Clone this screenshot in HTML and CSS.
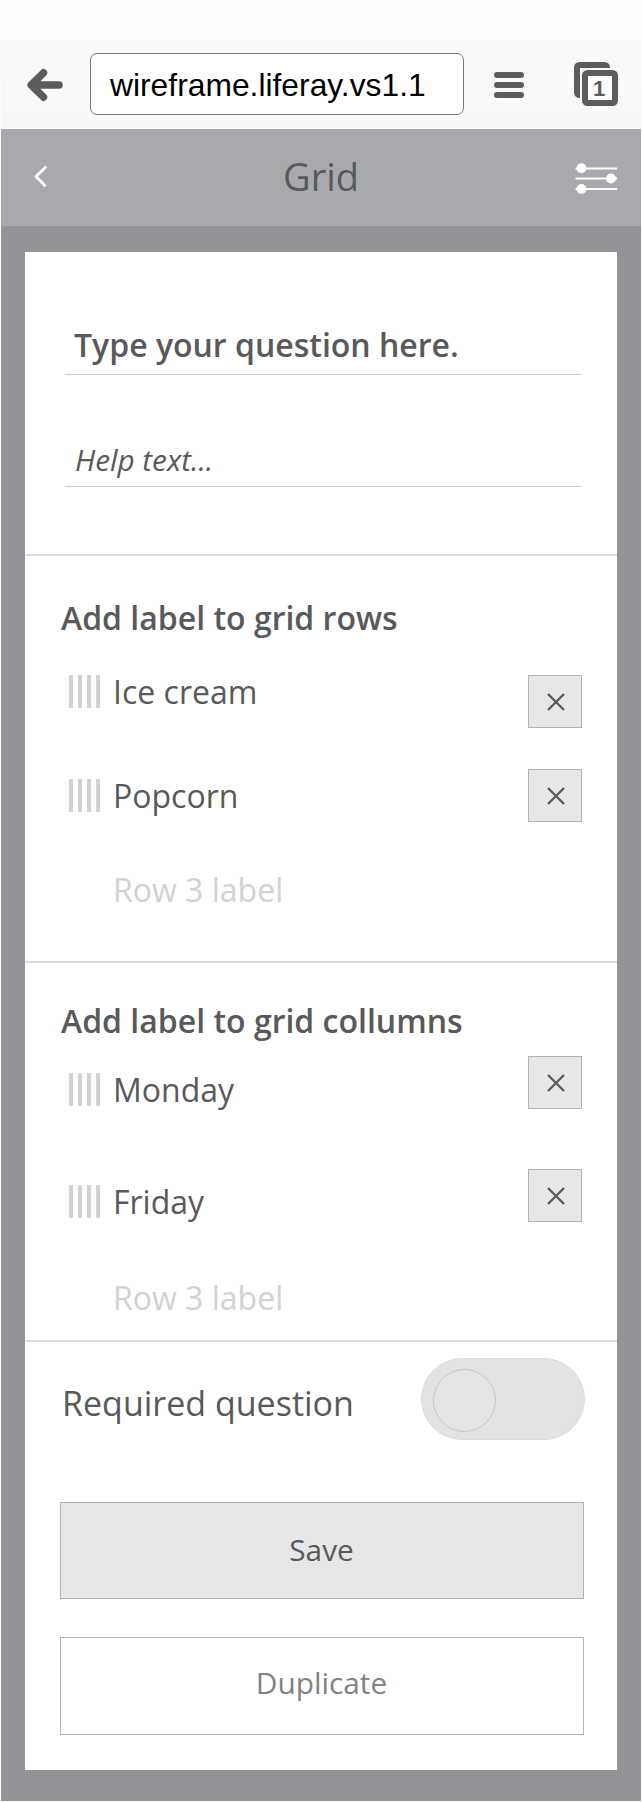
FILE: index.html
```html
<!DOCTYPE html>
<html lang="en">
<head>
<meta charset="utf-8">
<title>Grid</title>
<link rel="stylesheet" href="styles.css">
</head>
<body>
<div class="screen">
  <header class="browser">
    <svg class="back" width="38" height="34" viewBox="0 0 38 34"><path d="M6 17H33M17.500 4.800L5.200 17L17.500 29.200" fill="none" stroke="#5b5c5b" stroke-width="7.500" stroke-linecap="round" stroke-linejoin="round"/></svg>
    <div class="url"><span>wireframe.liferay.vs1.1</span></div>
    <svg class="menu" width="30" height="26" viewBox="0 0 30 26" fill="#5b5c5b"><rect width="30" height="6" rx="3"/><rect y="10" width="30" height="6" rx="3"/><rect y="20" width="30" height="6" rx="3"/></svg>
    <div class="tabs">
      <svg width="44" height="44" viewBox="0 0 44 44"><path d="M36 6V5.500A5.500 5.500 0 0 0 30.500 0H5.500A5.500 5.500 0 0 0 0 5.500V30.500A5.500 5.500 0 0 0 5.500 36H6V6Z" fill="#5b5c5b"/><rect x="8" y="8" width="36" height="36" rx="5.500" fill="#5b5c5b"/><rect x="14" y="14" width="24" height="24" fill="#fafbfb"/></svg>
      <span class="tab-count">1</span>
    </div>
  </header>
  <nav class="navbar">
    <svg class="chevron" width="14" height="24" viewBox="0 0 14 24"><path d="M12.300 1.500L2 11.500L11.500 21.300" fill="none" stroke="#fff" stroke-width="2.800"/></svg>
    <h1 class="title">Grid</h1>
    <svg class="sliders" width="42" height="32" viewBox="0 0 42 32"><path d="M.5 5.500H42M.5 15.500H42M.5 26H42" stroke="#fff" stroke-width="1.800"/><g fill="#fff"><circle cx="6.500" cy="5.300" r="5"/><circle cx="36" cy="15.500" r="5"/><circle cx="6.500" cy="26" r="5"/></g></svg>
  </nav>
  <main class="card">
    <section class="section question">
      <div class="field field-main"><span>Type your question here.</span></div>
      <div class="field field-help"><span>Help text...</span></div>
    </section>
    <section class="section rows">
      <h2 class="heading"><span>Add label to grid rows</span></h2>
      <div class="item item-a"><i class="handle"></i><span class="label">Ice cream</span><button class="remove"><svg width="20" height="20" viewBox="0 0 20 20"><path d="M2 2L18 18M18 2L2 18"/></svg></button></div>
      <div class="item item-b"><i class="handle"></i><span class="label">Popcorn</span><button class="remove"><svg width="20" height="20" viewBox="0 0 20 20"><path d="M2 2L18 18M18 2L2 18"/></svg></button></div>
      <div class="item item-new"><span class="label">Row 3 label</span></div>
    </section>
    <section class="section columns">
      <h2 class="heading"><span>Add label to grid collumns</span></h2>
      <div class="item item-c"><i class="handle"></i><span class="label">Monday</span><button class="remove"><svg width="20" height="20" viewBox="0 0 20 20"><path d="M2 2L18 18M18 2L2 18"/></svg></button></div>
      <div class="item item-d"><i class="handle"></i><span class="label">Friday</span><button class="remove"><svg width="20" height="20" viewBox="0 0 20 20"><path d="M2 2L18 18M18 2L2 18"/></svg></button></div>
      <div class="item item-new"><span class="label">Row 3 label</span></div>
    </section>
    <section class="actions">
      <div class="required"><span class="required-label">Required question</span><span class="toggle"><span class="knob"></span></span></div>
      <button class="btn save">Save</button>
      <button class="btn duplicate">Duplicate</button>
    </section>
  </main>
</div>
</body>
</html>
```
FILE: styles.css
```css
* { box-sizing: border-box; }
body { margin: 0; background: #fcfdfc; font-family: "Open Sans", "Noto Sans", sans-serif; color: #58595b; }
svg { display: block; }
h1, h2 { margin: 0; font-weight: 400; }
span { white-space: nowrap; }
button { font: inherit; color: inherit; padding: 0; }

.screen { width: 640px; height: 1801px; margin: 0 1px 1px; background: #939498; }

.browser { display: flex; height: 129px; background: linear-gradient(#fcfdfc 0 40px, #f9fafc 40px, #f8f9f9 112px, #f5f6f8 128px, #fff 128px); }
.back { margin: 68px 0 0 25px; }
.url { width: 374px; height: 62px; margin: 53px 0 0 26px; padding-left: 19px; border: 1px solid #77787b; border-radius: 7px; background: #fff; font: 31.8px/62px "Liberation Sans", Arial, sans-serif; color: #000; }
.menu { margin: 72px 0 0 30px; }
.tabs { position: relative; margin: 62px 0 0 50px; }
.tab-count { position: absolute; left: 13px; top: 14px; width: 24px; text-align: center; font: bold 22px/25px "Liberation Sans", Arial, sans-serif; color: #5b5c5b; }

.navbar { display: flex; justify-content: space-between; height: 97px; padding: 0 24px 0 33px; background: #a8a9ad; }
.chevron { margin-top: 36px; }
.title { margin: 21px 0 0 19px; font-size: 38px; line-height: 52px; }
.sliders { margin-top: 34px; }

.card { width: 592px; height: 1518px; margin: 26px 0 0 24px; background: #fff; }
.section { border-bottom: 2px solid #dcdddd; }

.question { height: 304px; padding: 71px 36px 0 40px; }
.field { border-bottom: 1px solid #c9cacb; padding-left: 9px; }
.field-main { height: 52px; font-size: 32px; line-height: 44px; font-weight: 600; }
.field-help { height: 47px; margin-top: 65px; padding-left: 10px; font-size: 29.7px; line-height: 40px; font-style: italic; }

.rows { height: 407px; padding: 40px 35px 0 36px; }
.columns { height: 379px; padding: 36px 35px 0 36px; }
.heading { height: 44px; font-size: 32px; line-height: 44px; font-weight: 600; }
.item { display: flex; padding-left: 8px; }
.handle { width: 31px; height: 33px; border-radius: 1px; background: repeating-linear-gradient(90deg, #d1d2d3 0 4px, #fff 4px 9px); }
.label { margin-left: 13px; font-size: 32px; line-height: 44px; }
.remove { display: flex; align-items: center; justify-content: center; width: 54px; height: 53px; margin-left: auto; padding-left: 2px; border: 1px solid #b3b4b7; background: #e6e7e8; }
.remove path { fill: none; stroke: #58595b; stroke-width: 2.3; }
.item-a { height: 99px; margin-top: 30px; }
.item-a .handle, .item-a .remove { margin-top: 5px; }
.item-b { height: 99px; }
.item-b .handle { margin-top: 10px; }
.item-b .label { margin-top: 5px; }
.item-c { height: 113px; margin-top: 13px; }
.item-c .handle { margin-top: 17px; }
.item-c .label { margin-top: 12px; }
.item-d { height: 107px; }
.item-d .handle { margin-top: 16px; }
.item-d .label { margin-top: 11px; }
.item-new { padding-left: 39px; color: #d1d2d3; }

.actions { display: flex; flex-direction: column; padding: 16px 33px 0 35px; }
.required { display: flex; justify-content: space-between; height: 144px; padding: 0 0 0 2px; margin-right: -1px; }
.required-label { margin-top: 22px; font-size: 34px; line-height: 46px; }
.toggle { width: 164px; height: 82px; padding: 10px 11px; border: 1px solid #dcdcdc; border-radius: 41px; background: #e2e3e4; }
.knob { display: block; width: 63px; height: 63px; border: 1px solid #c5c6c8; border-radius: 50%; background: #e5e5e5; }
.btn { height: 98px; border: 1px solid #b3b4b7; font-size: 29.8px; line-height: 40px; }
.save { height: 97px; padding-bottom: 1px; padding-right: 1px; background: #e6e7e8; }
.duplicate { margin-top: 38px; padding-bottom: 7px; padding-right: 1px; background: #fff; color: #808285; }
```
